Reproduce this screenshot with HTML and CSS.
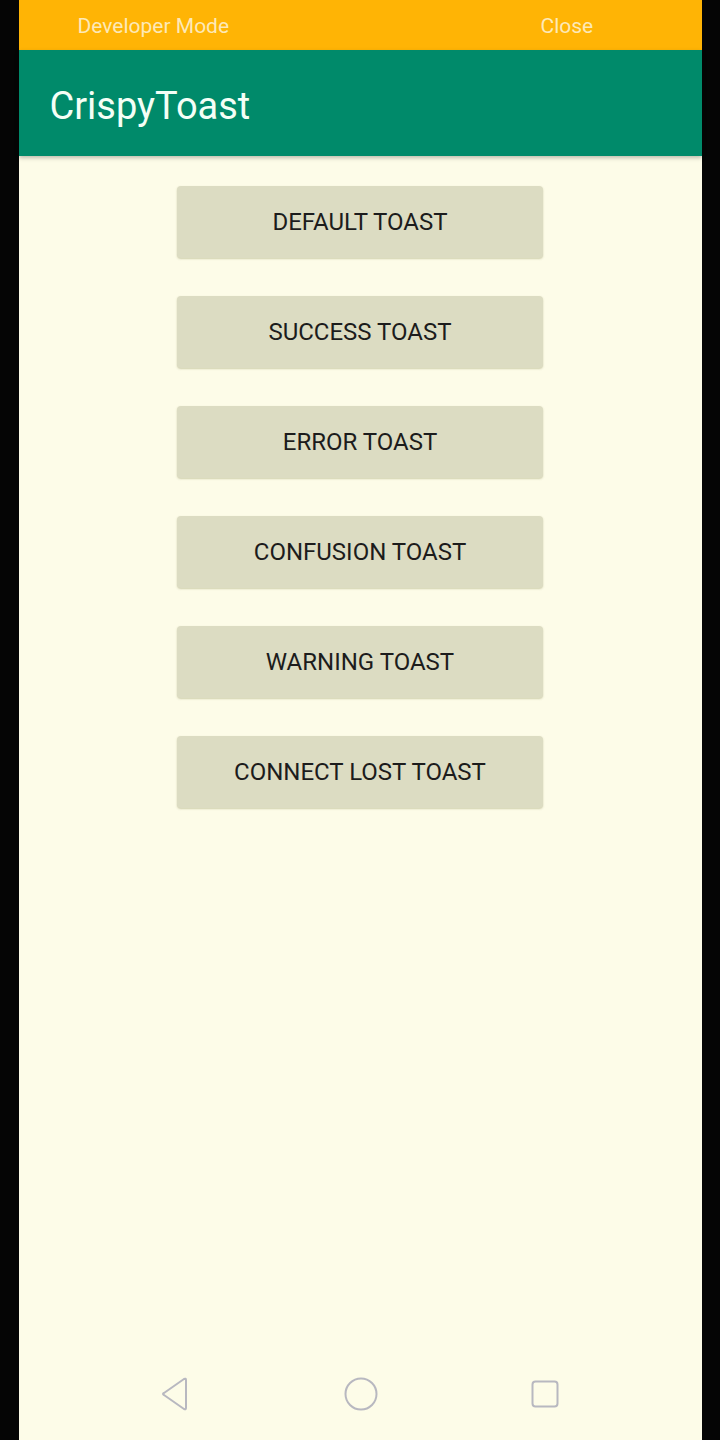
FILE: index.html
```html
<!DOCTYPE html>
<html>
<head>
<meta charset="utf-8">
<link rel="stylesheet" href="styles.css">
</head>
<body>
<div class="frame">
  <div class="screen">
    <div class="devbar">
      <span class="dev-label">Developer Mode</span>
      <span class="dev-close">Close</span>
    </div>
    <div class="appbar">
      <h1 class="title">CrispyToast</h1>
    </div>
    <div class="content">
      <button class="btn">DEFAULT TOAST</button>
      <button class="btn">SUCCESS TOAST</button>
      <button class="btn">ERROR TOAST</button>
      <button class="btn">CONFUSION TOAST</button>
      <button class="btn">WARNING TOAST</button>
      <button class="btn">CONNECT LOST TOAST</button>
    </div>
    <div class="navbar">
      <svg class="nav-icon" width="32" height="34" viewBox="0 0 32 34">
        <path d="M26 3 L26 31 Q26 33 24 32 L4 18 Q2 17 4 16 L24 2 Q26 1 26 3 Z" fill="none" stroke="#b8b8c0" stroke-width="2" stroke-linejoin="round"/>
      </svg>
      <svg class="nav-icon" width="34" height="34" viewBox="0 0 34 34">
        <circle cx="17" cy="17" r="15.5" fill="none" stroke="#b8b8c0" stroke-width="2"/>
      </svg>
      <svg class="nav-icon" width="28" height="28" viewBox="0 0 28 28">
        <rect x="1.5" y="1.5" width="25" height="25" rx="3" fill="none" stroke="#b8b8c0" stroke-width="2"/>
      </svg>
    </div>
  </div>
</div>
</body>
</html>
```

FILE: styles.css
```css
html, body {
  margin: 0;
  padding: 0;
  background: #050505;
}
.frame {
  width: 720px;
  height: 1440px;
  display: flex;
  justify-content: center;
  background: #050505;
}
.screen {
  width: 683px;
  height: 1440px;
  background: #fdfce8;
  display: flex;
  flex-direction: column;
  font-family: Roboto, "Liberation Sans", sans-serif;
}
.devbar {
  height: 50px;
  background: #ffb405;
  display: flex;
  align-items: center;
  padding: 2px 0 0 59px;
  box-sizing: border-box;
  color: #fde9b8;
  font-size: 21px;
  flex-shrink: 0;
}
.dev-label {
  width: 463px;
}
.appbar {
  height: 106px;
  background: #008a6a;
  display: flex;
  align-items: center;
  padding-left: 31px;
  padding-top: 6px;
  box-sizing: border-box;
  box-shadow: 0 2px 4px rgba(0,0,0,0.25);
  flex-shrink: 0;
  position: relative;
  z-index: 1;
}
.title {
  margin: 0;
  font-weight: 400;
  font-size: 38px;
  color: #f4fff6;
}
.content {
  flex: 1;
  display: flex;
  flex-direction: column;
  align-items: center;
  gap: 38px;
  padding-top: 30px;
}
.btn {
  width: 366px;
  height: 72px;
  border: none;
  border-radius: 4px;
  background: #dcdcc2;
  box-shadow: 0 1px 2px rgba(120,120,60,0.35);
  font-family: Roboto, "Liberation Sans", sans-serif;
  font-size: 24px;
  color: #1c1c1c;
  padding: 0;
}
.navbar {
  height: 92px;
  display: flex;
  align-items: center;
  justify-content: space-between;
  padding: 0 143px 0 141px;
  flex-shrink: 0;
}
```
